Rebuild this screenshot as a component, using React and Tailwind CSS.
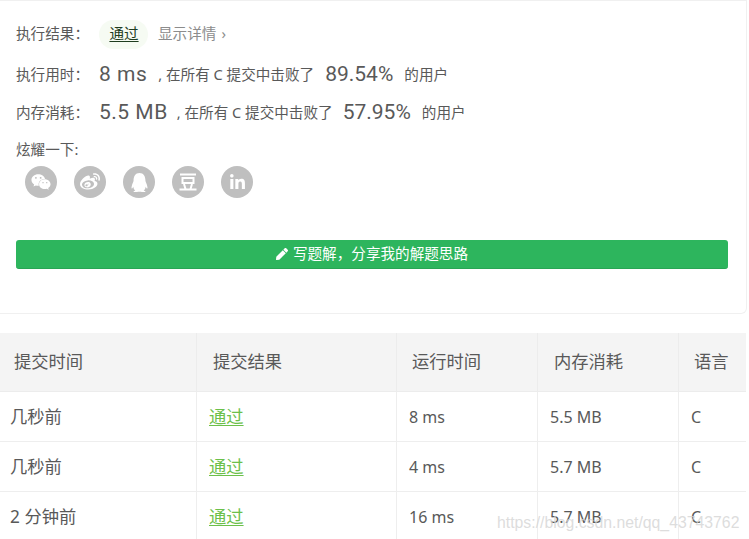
import { FaWeixin, FaWeibo, FaQq, FaLinkedinIn, FaPen } from 'react-icons/fa'

const cjk = 'font-["Noto_Sans","Noto_Sans_CJK_SC",sans-serif]'

const rows = [
  { time: '几秒前', run: '8 ms', mem: '5.5 MB' },
  { time: '几秒前', run: '4 ms', mem: '5.7 MB' },
  { time: '2 分钟前', run: '16 ms', mem: '5.7 MB' },
]

function DoubanIcon() {
  return (
    <svg viewBox="0 0 20 20" className="w-[20px] h-[20px]" fill="none" stroke="white" strokeWidth="2">
      <path d="M2 2.500h16" />
      <rect x="4.500" y="6" width="11" height="5" />
      <path d="M6 12l1.500 5M14 12l-1.500 5M1.500 17.500h17" />
    </svg>
  )
}

function Stat({ label, value, pct, valueGap, pctGap }) {
  return (
    <div className="flex items-center h-[38px] text-[14.600px] text-[#595959]">
      <span className="w-[83px]">{label}</span>
      <span className={`font-["Roboto",sans-serif] text-[21px] tracking-[0.5px] ${valueGap}`}>{value}</span>
      <span>, 在所有 C 提交中击败了</span>
      <span className={`font-["Roboto",sans-serif] text-[21px] mr-[11px] ${pctGap}`}>{pct}</span>
      <span>的用户</span>
    </div>
  )
}

export default function App() {
  return (
    <div className={`relative w-[749px] h-[539px] overflow-hidden bg-white ${cjk}`}>
      <div className="h-[314px] w-[747px] pt-[18px] border-t border-b border-r border-[#f0f0f0] rounded-br-md">
        <div className="pl-[16px]">
          <div className="flex items-center h-[30px] text-[14.600px]">
            <span className="w-[83px] text-[#595959]">执行结果：</span>
            <span className="w-[49px] h-[29px] pl-[1px] flex items-center justify-center rounded-full bg-[#f6fbf3] text-[#1f3d1f] underline underline-offset-2">通过</span>
            <span className="ml-[10px] text-[#8c8c8c]">显示详情<span className="ml-[5px]">›</span></span>
          </div>
          <div className="mt-[7px]">
            <Stat label="执行用时：" value="8 ms" pct="89.54%" valueGap="mr-[11px]" pctGap="ml-[11px]" />
            <Stat label="内存消耗：" value="5.5 MB" pct="57.95%" valueGap="mr-[9px]" pctGap="ml-[10px]" />
          </div>
          <div className="mt-[7px] h-[22px] flex items-center text-[14.600px] text-[#595959]">炫耀一下:</div>
          <div className="flex gap-[17px] ml-[9px] mt-[5px]">
            <span className="w-[32px] h-[32px] rounded-full bg-[#bfbfbf] flex items-center justify-center text-white text-[20px]"><FaWeixin /></span>
            <span className="w-[32px] h-[32px] rounded-full bg-[#bfbfbf] flex items-center justify-center text-white text-[20px]"><FaWeibo /></span>
            <span className="w-[32px] h-[32px] rounded-full bg-[#bfbfbf] flex items-center justify-center text-white text-[19px]"><FaQq /></span>
            <span className="w-[32px] h-[32px] rounded-full bg-[#bfbfbf] flex items-center justify-center"><DoubanIcon /></span>
            <span className="w-[32px] h-[32px] rounded-full bg-[#bfbfbf] flex items-center justify-center text-white text-[17px]"><FaLinkedinIn /></span>
          </div>
          <button className="mt-[42px] w-[712px] h-[29px] flex items-center justify-center gap-[5px] rounded-[3px] bg-[#2db55d] border-b border-[#28a554] text-white text-[14.600px]">
            <FaPen className="text-[12px]" />
            写题解，分享我的解题思路
          </button>
        </div>
      </div>

      <div className="mt-[19px] w-[746px]">
        <div className="grid grid-cols-[197px_200px_141px_141px_1fr] h-[59px] bg-[#f4f4f4] text-[17.300px] text-[#595959] border-b border-[#ececec]">
          <div className="flex items-center pl-[14px] border-r border-[#ececec]">提交时间</div>
          <div className="flex items-center pl-[16px] border-r border-[#ececec]">提交结果</div>
          <div className="flex items-center pl-[15px] border-r border-[#ececec]">运行时间</div>
          <div className="flex items-center pl-[16px] border-r border-[#ececec]">内存消耗</div>
          <div className="flex items-center pl-[15px]">语言</div>
        </div>
        {rows.map((r, i) => (
          <div key={i} className="grid grid-cols-[197px_200px_141px_141px_1fr] h-[50px] text-[16px] text-[#595959] border-b border-[#eeeeee]">
            <div className="flex items-center pl-[10px] text-[17.300px] border-r border-[#eeeeee]">{r.time}</div>
            <div className="flex items-center pl-[12px] border-r border-[#eeeeee]"><span className="text-[17.300px] text-[#6cc04a] underline underline-offset-2">通过</span></div>
            <div className="flex items-center pl-[12px] border-r border-[#eeeeee]">{r.run}</div>
            <div className="flex items-center pl-[12px] border-r border-[#eeeeee]">{r.mem}</div>
            <div className="flex items-center pl-[12px]">C</div>
          </div>
        ))}
      </div>

      <div className='absolute left-[497px] top-[511px] font-["Liberation_Sans",sans-serif] text-[15.800px] text-[#d4d4d4]/80 whitespace-nowrap'>
        https://blog.csdn.net/qq_43743762
      </div>
    </div>
  )
}
